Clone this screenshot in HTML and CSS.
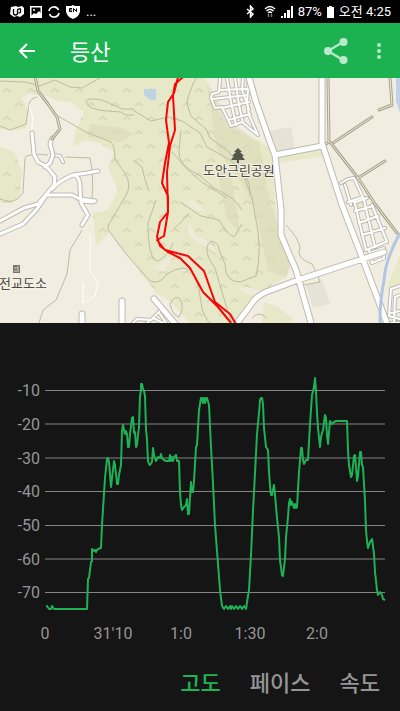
FILE: index.html
```
<!DOCTYPE html>
<html lang="ko">
<head>
<meta charset="utf-8">
<title>등산</title>
<meta name="viewport" content="width=device-width, initial-scale=1.0">
<link rel="stylesheet" href="styles.css">
</head>
<body>
<div class="status">
    <div class="status-left">
        <svg width="14" height="13" viewBox="0 0 14 13"><path d="M1 2l5-1 2 1 4-1 2 2v6l-4 3-3-1-3 1-4-3z" fill="#fff"/><path d="M3.5 4v4q0 2 2 2t2-2V5.500q0-2 3-1.500v3q0 1-2 1" fill="none" stroke="#000" stroke-width="1.3"/></svg>
        <svg width="12" height="12" viewBox="0 0 12 12"><path fill="#fff" fill-rule="evenodd" d="M0 0h12v12H0zM1.5 1.5v8L4 7l2 1 3-3 1.500 2V1.500z"/><circle cx="4" cy="4" r="1" fill="#fff"/></svg>
        <svg width="12" height="12" viewBox="0 0 12 12"><path d="M1 5a5 5 0 0 1 9.500-1M11 7a5 5 0 0 1-9.500 1" fill="none" stroke="#fff" stroke-width="1.7"/></svg>
        <svg width="14" height="14" viewBox="0 0 14 14"><path d="M7 0l2 1h5v5q0 5-7 8-7-3-7-8V1h5z" fill="#fff"/><path d="M6 3.500H3.500v3H6M3.500 5H6M7.500 7V3.500l3 3v-3" fill="none" stroke="#000"/></svg>
        <span class="more">...</span>
    </div>
    <div class="status-right">
        <svg width="9" height="13" viewBox="0 0 9 13"><path d="M1 4l6 5-2.500 3V1L7 4 1 9" fill="none" stroke="#fff" stroke-width="1.5"/></svg>
        <svg class="wifi" width="12" height="13" viewBox="0 0 12 13"><path d="M1 4q5-5 10 0M2.500 6q3.500-3.500 7 0M4 8q2-2 4 0" fill="none" stroke="#fff" stroke-width="1.3"/><path d="M4.500 9v3M7.500 9v3" stroke="#777" stroke-width="1.5"/></svg>
        <svg width="12" height="12" viewBox="0 0 12 12"><path d="M0 10h2v2H0zM3 7h2v5H3zM6 4h3v8H6zM10 0h2v12h-2z" fill="#fff"/></svg>
        <span>87%</span>
        <svg width="7" height="12" viewBox="0 0 7 12"><path d="M2 0h3v1h2v11H0V1h2z" fill="#fff"/></svg>
        <span>오전 4:25</span>
    </div>
</div>

<header class="appbar">
    <button class="icon-btn" aria-label="뒤로"><svg width="16" height="16" viewBox="0 0 16 16"><path d="M8 1L1 8l7 7M1 8h15" fill="none" stroke="#fff" stroke-width="2"/></svg></button>
    <h1>등산</h1>
    <button class="icon-btn share" aria-label="공유"><svg width="24" height="26" viewBox="0 0 24 26"><path d="M19 4L4 13l15 9" fill="none" stroke="#bbe9cb" stroke-width="2.2"/><g fill="#bbe9cb"><circle cx="19.5" cy="4" r="4"/><circle cx="4" cy="13" r="4"/><circle cx="19.5" cy="22" r="4"/></g></svg></button>
    <button class="icon-btn" aria-label="더보기"><svg width="4" height="16" viewBox="0 0 4 16"><g fill="#bbe9cb"><circle cx="2" cy="2" r="2"/><circle cx="2" cy="8" r="2"/><circle cx="2" cy="14" r="2"/></g></svg></button>
</header>

<main>
<svg class="map" viewBox="0 78 400 245">
    <defs>
        <pattern id="trees" width="24" height="28" patternUnits="userSpaceOnUse">
            <path d="M3 8l4-3 4 3M15 22l4-3 4 3" class="tree"/>
        </pattern>
        <path id="forest" d="M0 78H205L216 108L230 128L258 140L271 150L274 180L277 225L292 262L287 277L264 290L250 300L240 323H190L172 303L156 293L134 263L118 245L110 232L96 245L93 213L108 210L118 190L108 168L114 152L100 143L84 140L73 147L76 130L84 112L70 102L54 100L48 96L38 95L28 94L22 98L28 110L26 128L17 130L0 129Z M0 147L14 152L22 170L20 195L12 203H0Z"/>
    </defs>
    <path d="M0 78h400v245H0z" class="land"/>
    <use href="#forest" class="forest"/>
    <path d="M206 80l24 42 29 21 12 65 20 54-5 15-18-6-12-58-14-30-25-33zM90 124l32 4 12 6-14 8-32-5zM217 168l14 6 9 60-13-16zM255 208l15-8 8 25-12 30zM207 238l11 20-13-9z" class="shade"/>
    <use href="#forest" fill="url(#trees)"/>
    <path d="M275 156l48-7 1 7-46 7zM350 205l8-6 6 7-9 3zM400 255l-14 35 14-6zM264 302l12 4 16 12v5h-30zM357 203l6-2 2 5-7 2z" class="forest"/>
    <path d="M270 131l21-4 3 21-21 6zM306 285l16-5 8 24-17 4z" class="block"/>
    <path d="M144 89h12v11h-6l-6-5zM396 78h4v35l-4-12z" class="water"/>
    <path d="M190 222q-6 10 4 18l24 14q-8-15-22-18zM184 202l10-2 12 11q-12 0-22-9zM152 267l22-12-10 17zM236 288l16 8 9-5-15-4z" class="clearing"/>
    <g class="contour">
        <path d="M0 81l25 1 15 4 15-6 15 7 12 1 18-10M0 126l10 4 16-6 3-20q2-6 8-7M56 115l30 17 25 10q4 4 4 17l11 16q6 12-1 22l-14 24q-5 5-2 10l18 24 23 26q10 4 17-7 19-12 27 0l5 15 3 20q5 14 12 17"/>
        <path d="M134 115q-10 1-13-3l-14-1q-18-1-21-9 0-5 16-2l20 9h12M25 157q6-4 23-2M25 158l-2 35q-8 13-23 6M65 157l25 1q4 16 2 41"/>
        <path d="M196 78q-9 18-9 26l4 12 15 13 4 9 18 13 13 16 3 10 8 20 3 18q8 35 1 61l-16 6q-15 0-15-18-5-10-7-19-9-9-11 3-1 8 8 20l7 24 7 23 10 27"/>
        <path d="M133 110l18 11 18-4 13 4 18 12 7 14 23 13q22 15 20 35M181 130l-2 20q-2 15 20 25l15 13q22 10 28 22M172 152l15 17 16 14 24 15M180 202l21 14 18 4q15 25 18 12l5-8M156 200l-8 23q0 37 10 38 10-5 15-18M174 229l15-15M286 225q14 15 14 23-5 10 12 16l5 10 3 8-22 4M133 160l9 7q2 12 7 24M82 230l-12 20-3 24-11 26-13 10-4 13M170 304q5-10 10-5 5 8-1 18-6-1-9-13M252 318q8-8 14 0"/>
    </g>

    <g class="road-edge thin">
        <path id="blocks" d="M220 78l-1 14-7 2-1 4 4 10 7-1 9 19 11-4 16 13-9-20-2-13 2-24M227 78l4 24 5 23M235 78l4 27 4 18M243 78l-1 12 7 19M219 90l28-1M213 99l34-4M222 108l27-6M228 120l22-6M354 200l12 50M364 200l11 47M372 205l15 37M351 201l5 1 11-4M355 211l18-5M359 223l19-7M362 235l23-7M366 250l20-8M369 250l3 13 12-5V248l-14 5M341 183l7-4 6-1 10 22M345 185l6 20M348 202l15-5M400 286l-9 3-2 27 11 3M394 323l1-26 5-2M391 313l9-2M386 323h14M53 155l7 1 3 6M133 323l4-4 14 1 10-10M147 323l6-5 10 5M160 314l6 9"/>
    </g>
    <path d="M90 235v36l8 11-3 14-9 6M83 283v20M29 105l4 13-2 16" class="faint"/>
    <use href="#blocks" class="road thin"/>
    <g class="road-edge medium">
        <path id="lanes" d="M32 133l2 21 4 8 8 4 9 11-1 8-16 19-14 4-24 13M52 138l-2 6 3 11-3 8-5 4M47 194l-10 15-14 15-23 10M52 189q8-9 21-14l14-2 11-2M47 195h25l8 4 15 2M74 175q6 2 6 12l1 16 7 12-6 10M82 201l11 1"/>
    </g>
    <use href="#lanes" class="road medium"/>
    <g class="trail-edge">
        <path id="paths" d="M35 76l3 15 10 13 9 13 3 12-8 10M328 78l1 64-3 2M330 142l28 36 17 26 22 29M333 143l39-26M358 178l27-17M390 78l2 27-13 5"/>
    </g>
    <use href="#paths" class="trail"/>
    <g class="road-edge wide">
        <path id="main-roads" d="M322 74v69q8 25 20 62l20 52 27 72M248 74l8 28 14 40 5 13 6 55v25l15 35 17 60M234 327l16-21q6-10 16-14l32-12 86-28M82 327v-13M122 327v-26M154 299l17 20 5 6M275 155l47-9"/>
    </g>
    <use href="#main-roads" class="road wide"/>
    <path d="M400 233q-15 27-16 48-4 17-4 42" class="river"/>

    <path d="M178 77l-4 16-6 9-2 18 3 23-4 20-3 20 6 13v16l-8 10-3 15 3 9 8 6 12 6 10 10 13 24 15 15 13 16M183 77l-8 7-2 12 2 34-5 16-3 26 1 40-4 24-7 4 8 10 23 6 16 15 11 31 15 12 6 10" class="track"/>

    <path d="M238 148l4 4h-2l4 4h-2l3 4h-6v3h-2v-3h-6l3-4h-2l4-4h-2z" fill="#55564a"/>
    <path d="M13 265h7v8h-7z" fill="#74746a"/><path d="M14 268h3M14 271h3M18 266v6" stroke="#dedacb"/>
    <text x="203" y="175">도안근린공원</text>
    <text x="-1" y="288">전교도소</text>
</svg>

<svg class="chart" viewBox="0 323 400 327">
    <path d="M45 390.5h340M45 424h340M45 458h340M45 491.5h340M45 525.5h340M45 559h340M45 592.5h340" class="grid"/>
    <g class="ylabels">
        <text x="40" y="396">-10</text>
        <text x="40" y="430">-20</text>
        <text x="40" y="464">-30</text>
        <text x="40" y="497">-40</text>
        <text x="40" y="531">-50</text>
        <text x="40" y="565">-60</text>
        <text x="40" y="598">-70</text>
    </g>
    <g class="xlabels">
        <text x="45" y="639">0</text>
        <text x="113" y="639">31'10</text>
        <text x="181" y="639">1:0</text>
        <text x="250" y="639">1:30</text>
        <text x="317" y="639">2:0</text>
    </g>
    <polyline class="line" points="46,606 47,606 49,609 51,609 52,606 54,609 87,609 88,579 89,578 91,562 92,561 92,549 94,551 95,550 96,552 97,550 98,549 101,548 102,525 105,478 107,459 108,458 109,462 111,487 113,470 114,461 115,465 117,484 118,484 119,475 121,465 122,431 123,425 124,430 125,434 126,431 127,434 128,447 129,447 130,434 132,418 133,417 134,433 135,432 136,447 137,445 138,435 139,427 140,396 141,390 141,384 142,384 143,389 144,391 145,396 146,429 147,440 148,461 149,464 150,465 152,462 153,448 154,455 155,458 156,461 158,457 160,458 161,454 162,458 164,460 166,461 169,461 170,455 171,461 172,457 173,461 174,457 176,455 177,461 179,461 180,492 181,505 182,510 184,507 186,505 187,499 188,514 189,514 191,482 192,492 193,492 194,481 196,447 197,445 199,410 201,398 202,398 203,403 204,398 205,403 206,398 207,398 209,405 211,447 213,483 215,525 218,564 220,590 222,606 224,609 226,606 228,609 230,606 231,609 232,606 234,609 236,606 238,609 240,606 242,609 244,606 246,609 248,596 249,590 251,555 253,511 255,473 257,434 259,413 260,400 261,398 262,398 263,404 264,428 266,447 268,450 269,471 270,486 271,495 272,495 274,485 275,495 277,518 279,537 280,560 282,575 283,576 285,559 286,537 288,517 289,503 290,499 291,505 292,502 294,508 295,504 296,508 297,507 299,472 301,448 302,448 303,460 304,464 306,460 308,460 310,424 312,395 314,387 315,378 316,391 317,413 318,428 320,447 321,437 323,430 325,415 326,418 327,436 328,444 330,421 332,424 334,422 336,421 347,421 348,450 349,465 351,477 352,475 354,456 355,455 356,467 357,481 358,476 360,452 361,452 362,465 363,467 365,501 366,530 367,541 368,548 370,542 372,539 374,554 375,572 377,590 378,595 380,592 382,595 383,599 385,600"/>
</svg>
</main>

<nav class="tabs">
    <button class="active">고도</button>
    <button>페이스</button>
    <button>속도</button>
</nav>
</body>
</html>
```
FILE: styles.css
```
* {
    margin: 0;
    padding: 0;
    box-sizing: border-box;
}

body {
    min-height: 100vh;
    background: #151515;
    color: #fff;
    font-family: Roboto, "Noto Sans CJK KR", sans-serif;
}

button {
    border: none;
    background: none;
    font-family: inherit;
    cursor: pointer;
}

svg {
    flex-shrink: 0;
}

.status {
    display: flex;
    justify-content: space-between;
    align-items: center;
    height: 23px;
    padding: 0 9px 0 10px;
    background: #000;
    font-size: 13px;
    line-height: 20px;
}

.status-left, .status-right {
    display: flex;
    align-items: center;
    gap: 5px;
}

.status-left {
    gap: 6px;
}

.status-right .wifi {
    margin: 0 0 0 4px;
}

.appbar {
    display: flex;
    align-items: center;
    height: 55px;
    padding: 0 19px;
    background: #1cb252;
}

.appbar h1 {
    flex: 1;
    margin-left: 35px;
    padding-top: 4px;
    font-size: 22px;
    font-weight: 400;
    line-height: 32px;
}

.icon-btn {
    display: flex;
}

.share {
    margin-right: 29px;
}

.map, .chart {
    display: block;
    width: 100%;
}

.land {
    fill: #f1ede0;
}

.forest {
    fill: #e7e8c8;
}

.shade {
    fill: #d9d7b5;
    opacity: 0.5;
}

.tree {
    fill: none;
    stroke: #d8dab8;
    stroke-width: 2;
}

.block {
    fill: #e6e2d6;
}

.water {
    fill: #c0d3e6;
}

.clearing {
    fill: #efebd9;
}

.contour {
    fill: none;
    stroke: #bdbca3;
    stroke-width: 1;
}

.road-edge, .road, .trail, .trail-edge, .faint {
    fill: none;
    stroke-linecap: round;
    stroke-linejoin: round;
}

.road-edge {
    stroke: #bdbab2;
}

.road {
    stroke: #fff;
}

.road-edge.thin {
    stroke-width: 4;
}

.road.thin {
    stroke-width: 2;
}

.faint {
    stroke: #fff;
    stroke-width: 1;
}

.road-edge.medium {
    stroke-width: 5;
}

.road.medium {
    stroke-width: 3;
}

.road-edge.wide {
    stroke-width: 7;
}

.road.wide {
    stroke-width: 5;
}

.trail-edge {
    stroke: #a8a28c;
    stroke-width: 3;
}

.trail {
    stroke: #eeead9;
    stroke-width: 1;
}

.river {
    fill: none;
    stroke: #afc7e3;
    stroke-width: 3;
}

.track {
    fill: none;
    stroke: #f80505;
    stroke-width: 2;
    stroke-linejoin: round;
}

.map text {
    font-size: 13px;
    fill: #4b4a42;
    stroke: #f5f2e6;
    stroke-width: 2;
    paint-order: stroke;
}

.grid {
    stroke: #858585;
    stroke-width: 1;
}

.chart text {
    font-size: 16px;
    fill: #959595;
}

.ylabels {
    text-anchor: end;
}

.xlabels {
    text-anchor: middle;
}

.line {
    fill: none;
    stroke: #1fb155;
    stroke-width: 2;
    stroke-linejoin: round;
}

.tabs {
    display: flex;
    justify-content: flex-end;
    gap: 29px;
    padding: 18px 20px 10px;
}

.tabs button {
    color: #959595;
    font-size: 22px;
    font-weight: 500;
    line-height: 32px;
}

.tabs .active {
    color: #1fb155;
}
```
